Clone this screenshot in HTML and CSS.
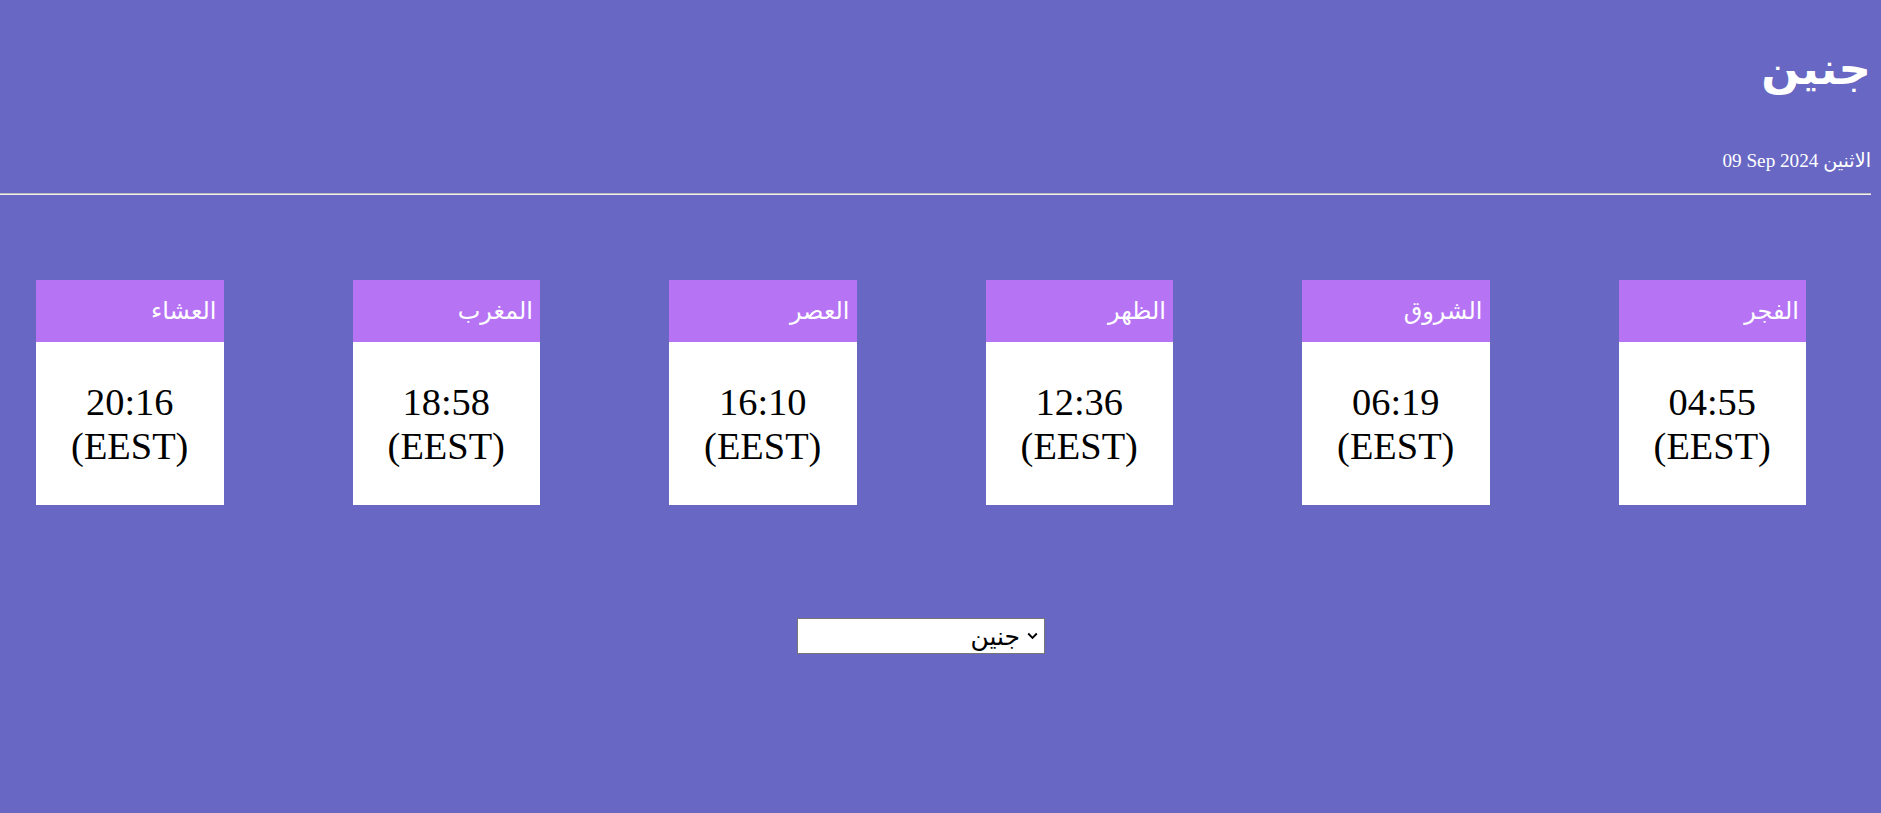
FILE: index.html
```html
<!DOCTYPE html>
<html lang="ar" dir="rtl">
<head>
<meta charset="utf-8">
<title>مواقيت الصلاة - جنين</title>
<link rel="stylesheet" href="styles.css">
</head>
<body>
<header class="top">
  <h1 class="city">جنين</h1>
  <p class="date">الاثنين <bdi dir="ltr">09 Sep 2024</bdi></p>
</header>
<hr class="rule">
<section class="times">
  <div class="card"><div class="card-head">الفجر</div><div class="card-body">04:55<br>(EEST)</div></div>
  <div class="card"><div class="card-head">الشروق</div><div class="card-body">06:19<br>(EEST)</div></div>
  <div class="card"><div class="card-head">الظهر</div><div class="card-body">12:36<br>(EEST)</div></div>
  <div class="card"><div class="card-head">العصر</div><div class="card-body">16:10<br>(EEST)</div></div>
  <div class="card"><div class="card-head">المغرب</div><div class="card-body">18:58<br>(EEST)</div></div>
  <div class="card"><div class="card-head">العشاء</div><div class="card-body">20:16<br>(EEST)</div></div>
</section>
<div class="picker">
  <div class="select-wrap">
    <select class="city-select">
      <option>جنين</option>
      <option>نابلس</option>
      <option>رام الله</option>
      <option>القدس</option>
      <option>الخليل</option>
    </select>
    <svg class="select-arrow" width="11" height="8" viewBox="0 0 11 8"><path d="M1.2 1.5 L5.5 5.8 L9.8 1.5" fill="none" stroke="#000" stroke-width="1.9"/></svg>
  </div>
</div>
</body>
</html>
```
FILE: styles.css
```css
html, body {
  margin: 0;
  padding: 0;
}
body {
  background: #6868c4;
  font-family: "Liberation Serif", "DejaVu Sans", serif;
  color: #fff;
  min-height: 813px;
}
.top {
  padding: 0 10px 0 10px;
}
.city {
  margin: 0;
  padding-top: 34px;
  font-size: 45px;
  font-weight: bold;
  line-height: 70px;
}
.date {
  margin: 0;
  padding-top: 46px;
  font-size: 19.2px;
  line-height: 22px;
}
.rule {
  margin: 21px 10px 0 0;
  border: 0;
  border-top: 1px solid #b9b9b9;
  border-bottom: 1px solid #f2f2f2;
  height: 0;
}
.times {
  display: flex;
  gap: 129px;
  padding-right: 75px;
  margin-top: 85px;
}
.card {
  width: 187.5px;
  flex: none;
  background: #fff;
}
.card-head {
  height: 62px;
  background: #b674f5;
  color: #fff;
  font-size: 24px;
  padding: 0 7px;
  display: flex;
  align-items: center;
}
.card-body {
  height: 163px;
  color: #000;
  font-size: 38.4px;
  line-height: 44px;
  text-align: center;
  display: flex;
  align-items: center;
  justify-content: center;
}
.picker {
  display: flex;
  justify-content: center;
  padding-right: 39px;
  margin-top: 113px;
}
.select-wrap {
  position: relative;
  width: 248px;
  height: 36px;
}
.city-select {
  appearance: none;
  -webkit-appearance: none;
  width: 248px;
  height: 36px;
  margin: 0;
  border: 1px solid #767676;
  border-radius: 0;
  background: #fff;
  color: #000;
  font-family: "DejaVu Sans", "Liberation Sans", sans-serif;
  font-size: 25px;
  padding: 0 24px 0 4px;
  direction: rtl;
}
.select-arrow {
  position: absolute;
  right: 7px;
  top: 14px;
  pointer-events: none;
}
```
